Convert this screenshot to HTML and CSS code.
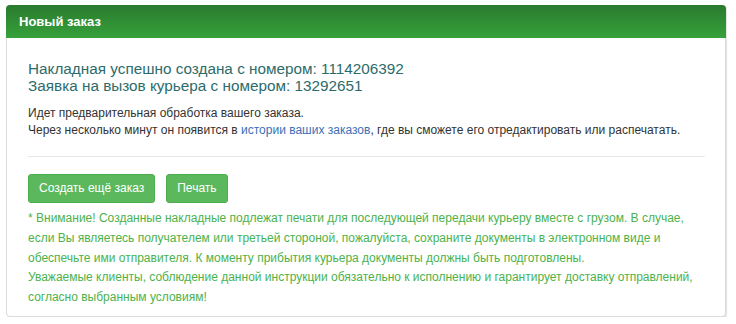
FILE: index.html
```html
<!DOCTYPE html>
<html lang="ru">
<head>
<meta charset="utf-8">
<title>Новый заказ</title>
<link rel="stylesheet" href="styles.css">
</head>
<body>
<div class="page">
  <div class="panel">
    <div class="panel-heading">Новый заказ</div>
    <div class="panel-body">
      <div class="result">
        <div>Накладная успешно создана с номером: 1114206392</div>
        <div>Заявка на вызов курьера с номером: 13292651</div>
      </div>
      <div class="info">
        <div>Идет предварительная обработка вашего заказа.</div>
        <div>Через несколько минут он появится в <a href="#">истории ваших заказов</a>, где вы сможете его отредактировать или распечатать.</div>
      </div>
      <hr class="divider">
      <div class="actions">
        <button class="btn">Создать ещё заказ</button>
        <button class="btn">Печать</button>
      </div>
      <p class="note">* Внимание! Созданные накладные подлежат печати для последующей передачи курьеру вместе с грузом. В случае, если Вы являетесь получателем или третьей стороной, пожалуйста, сохраните документы в электронном виде и обеспечьте ими отправителя. К моменту прибытия курьера документы должны быть подготовлены.<br>Уважаемые клиенты, соблюдение данной инструкции обязательно к исполнению и гарантирует доставку отправлений, согласно выбранным условиям!</p>
    </div>
  </div>
</div>
</body>
</html>
```

FILE: styles.css
```css
html, body {
  margin: 0;
  padding: 0;
  background: #fff;
}
body {
  font-family: "Liberation Sans", Arial, sans-serif;
  font-size: 12px;
  color: #333;
}
.page {
  padding: 5px 10px 0 6px;
}
.panel {
  border: 1px solid #dcdcdc;
  border-radius: 4px;
  box-shadow: 1px 1px 1px rgba(0, 0, 0, 0.12);
  background: #fff;
}
.panel-heading {
  height: 33px;
  line-height: 33px;
  padding: 0 13px;
  margin: -1px -1px 0 -1px;
  border-radius: 4px 4px 0 0;
  background: linear-gradient(to bottom, #2a7a2e, #36a13b);
  color: #fff;
  font-weight: bold;
  font-size: 13px;
}
.panel-body {
  padding: 22px 20px 8px 21px;
}
.result {
  font-size: 15.3px;
  line-height: 17px;
  color: #2d6b6a;
}
.info {
  margin-top: 11px;
  line-height: 17px;
}
.info a {
  color: #3a70b5;
  text-decoration: none;
}
.divider {
  border: 0;
  border-top: 1px solid #e8e8e8;
  margin: 17px 0 17px 0;
}
.actions {
  display: flex;
  gap: 11px;
}
.btn {
  font-family: "Liberation Sans", Arial, sans-serif;
  font-size: 12px;
  line-height: 17px;
  padding: 5px 10px;
  color: #fff;
  background: #5cb85c;
  border: 1px solid #4cae4c;
  border-radius: 3px;
}
.note {
  margin: 6px 0 0 0;
  line-height: 19.75px;
  color: #4cb24c;
}
```
